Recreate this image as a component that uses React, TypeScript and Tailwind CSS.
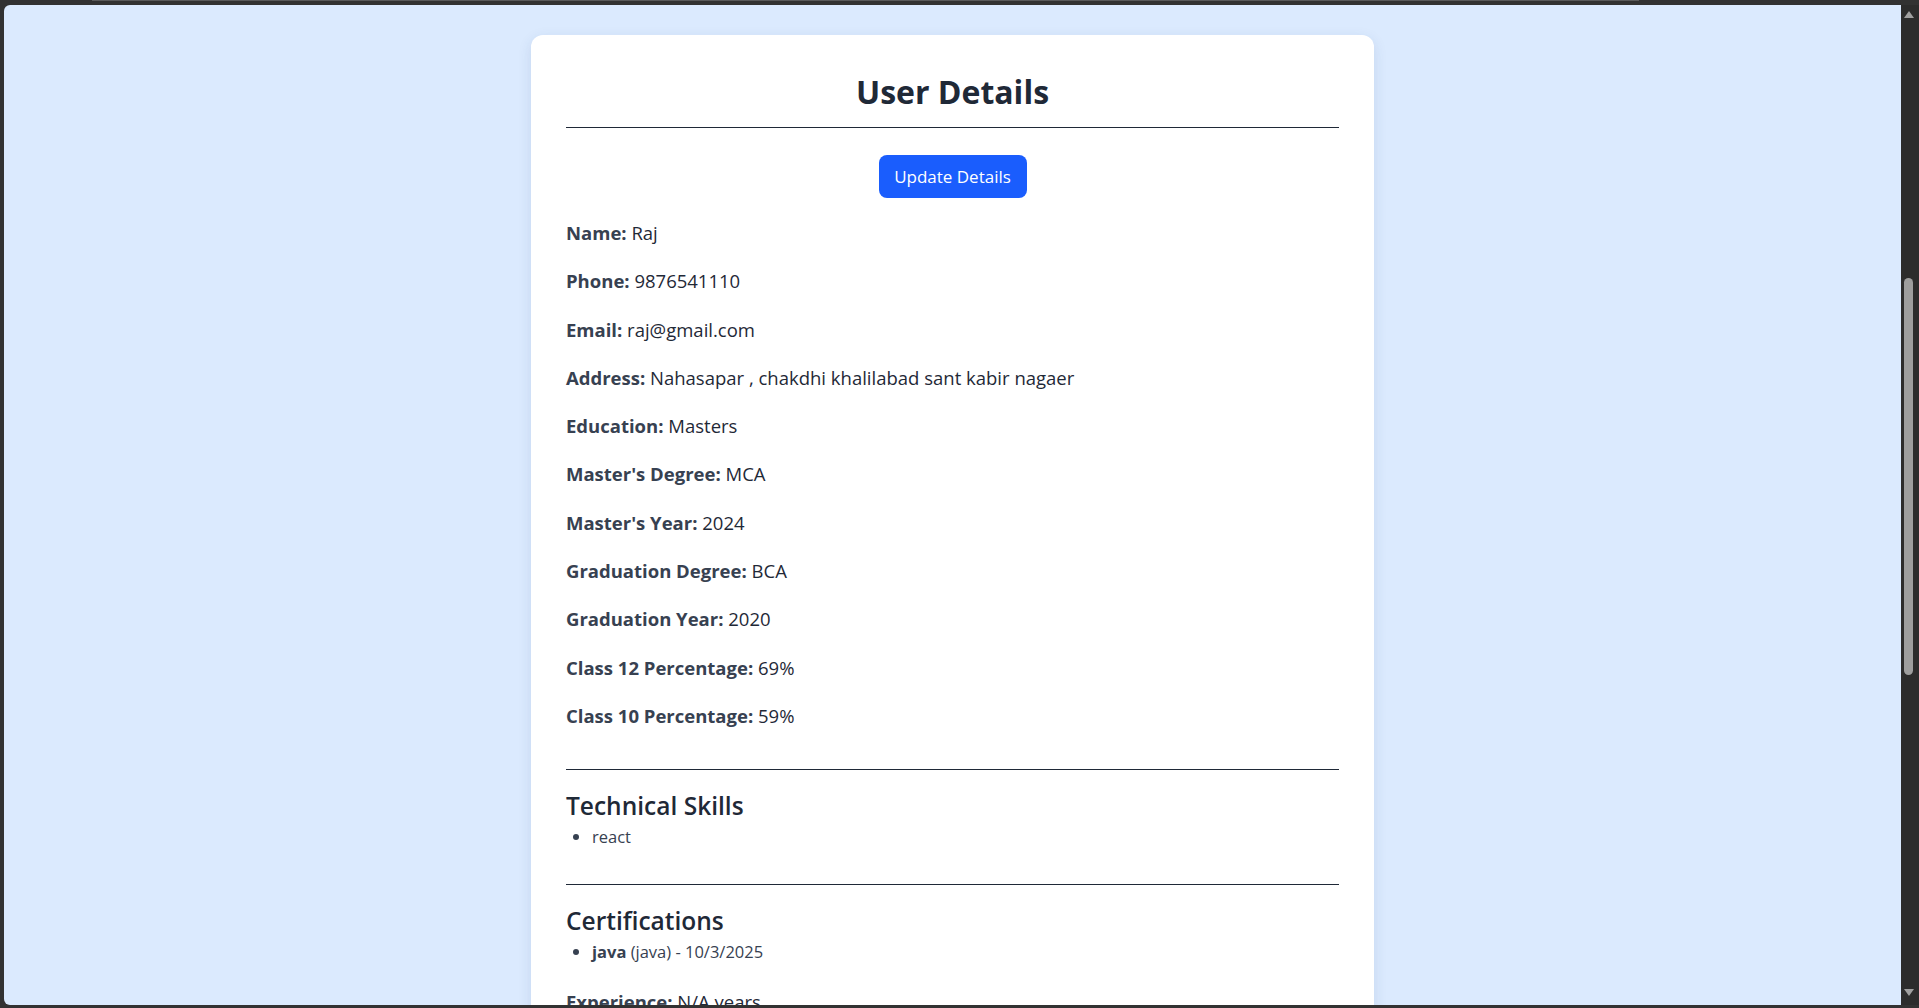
import React from "react";

const rows: [string, string][] = [
  ["Name:", "Raj"],
  ["Phone:", "9876541110"],
  ["Email:", "raj@gmail.com"],
  ["Address:", "Nahasapar , chakdhi khalilabad sant kabir nagaer"],
  ["Education:", "Masters"],
  ["Master's Degree:", "MCA"],
  ["Master's Year:", "2024"],
  ["Graduation Degree:", "BCA"],
  ["Graduation Year:", "2020"],
  ["Class 12 Percentage:", "69%"],
  ["Class 10 Percentage:", "59%"],
];

export default function App() {
  return (
    <div className="h-[1008px] w-full overflow-hidden bg-[#323232] font-['Open_Sans',sans-serif] flex flex-col">
      {/* top chrome */}
      <div className="h-[5px] shrink-0 relative">
        <div className="absolute left-[92px] right-[280px] top-0 h-[1px] bg-[#5a5a5a]" />
      </div>
      <div className="flex flex-1 min-h-0">
        <div className="w-[4px] shrink-0" />
        <div className="flex-1 h-[1000px] bg-[#dbeafe] rounded-tl-[6px] rounded-bl-[6px] overflow-hidden">
          <div className="pt-[30px] flex justify-center">
            <div className="w-[843px] bg-white rounded-xl shadow-[0_4px_14px_rgba(30,64,120,0.12)] px-[35px] pt-[35px] pb-[40px] text-[#1f2937]">
              <div className="border-b border-[#1f2937] pb-[15px] pt-[2px]">
                <h1 className="text-center text-[32px] leading-[40px] font-bold text-[#1f2937]">User Details</h1>
              </div>
              <div className="flex justify-center mt-[27px]">
                <button className="h-[43px] w-[148px] rounded-lg bg-[#1a5dfd] text-white text-[17px]">Update Details</button>
              </div>
              <div className="flex flex-col gap-[20px] mt-[21px]">
                {rows.map(([k, v]) => (
                  <p key={k} className="text-[18.5px] leading-[28.3px] text-[#1f2937]">
                    <span className="font-bold text-[#374151]">{k}</span> {v}
                  </p>
                ))}
              </div>
              <div className="border-b border-[#1f2937] mt-[38.5px]" />
              <h2 className="mt-[20px] text-[24.5px] leading-[32px] font-semibold text-[#1f2937]">Technical Skills</h2>
              <ul className="mt-[3px] list-disc pl-[26px] text-[16.5px] leading-[24px] text-[#374151]">
                <li>react</li>
              </ul>
              <div className="border-b border-[#1f2937] mt-[35px]" />
              <h2 className="mt-[20px] text-[24.5px] leading-[32px] font-semibold text-[#1f2937]">Certifications</h2>
              <ul className="mt-[3.5px] list-disc pl-[26px] text-[16.5px] leading-[24px] text-[#374151]">
                <li>
                  <span className="font-bold">java</span> (java) - 10/3/2025
                </li>
              </ul>
              <p className="mt-[24px] text-[18.5px] leading-[28px] text-[#1f2937]">
                <span className="font-bold text-[#374151]">Experience:</span> N/A years
              </p>
              <div className="h-[200px]" />
            </div>
          </div>
        </div>
        {/* scrollbar */}
        <div className="w-[18px] shrink-0 h-[1000px] bg-[#2c2c2c] relative">
          <div className="absolute left-[3px] top-[6px] w-0 h-0 border-l-[5px] border-r-[5px] border-b-[7px] border-l-transparent border-r-transparent border-b-[#a0a0a0]" />
          <div className="absolute left-[3px] top-[273px] w-[9px] h-[397px] rounded-full bg-[#9e9e9e]" />
          <div className="absolute left-[3px] bottom-[9px] w-0 h-0 border-l-[5px] border-r-[5px] border-t-[7px] border-l-transparent border-r-transparent border-t-[#a0a0a0]" />
        </div>
      </div>
      <div className="h-[3px] shrink-0" />
    </div>
  );
}
